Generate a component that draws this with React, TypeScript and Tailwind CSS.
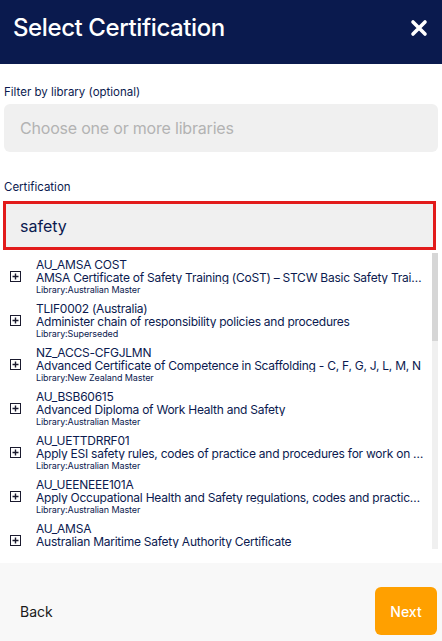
import React from 'react';

// Certification search results
const results = [
  { code: 'AU_AMSA COST', title: 'AMSA Certificate of Safety Training (CoST) – STCW Basic Safety Training', library: 'Australian Master' },
  { code: 'TLIF0002 (Australia)', title: 'Administer chain of responsibility policies and procedures', library: 'Superseded' },
  { code: 'NZ_ACCS-CFGJLMN', title: 'Advanced Certificate of Competence in Scaffolding - C, F, G, J, L, M, N', library: 'New Zealand Master' },
  { code: 'AU_BSB60615', title: 'Advanced Diploma of Work Health and Safety', library: 'Australian Master' },
  { code: 'AU_UETTDRRF01', title: 'Apply ESI safety rules, codes of practice and procedures for work on or near electrical apparatus', library: 'Australian Master' },
  { code: 'AU_UEENEEE101A', title: 'Apply Occupational Health and Safety regulations, codes and practices in the workplace', library: 'Australian Master' },
  { code: 'AU_AMSA', title: 'Australian Maritime Safety Authority Certificate', library: 'Australian Master' },
];

function PlusBox() {
  return (
    <svg width="11" height="11" viewBox="0 0 11 11" className="shrink-0">
      <rect x="0.5" y="0.5" width="10" height="10" fill="none" stroke="#1a1a2e" strokeWidth="1" />
      <path d="M5.5 2.5v6M2.5 5.5h6" stroke="#1a1a2e" strokeWidth="1.4" />
    </svg>
  );
}

export default function App() {
  return (
    <div className="flex h-[641px] w-[442px] flex-col bg-white font-['Inter',sans-serif] text-[#0b1a4f]">
      {/* Header */}
      <div className="flex h-16 shrink-0 items-center justify-between bg-[#0a1a4e] pb-2 pl-[13px] pr-[14px]">
        <h1 className="text-[24px] font-medium tracking-[-0.4px] text-white">Select Certification</h1>
        <svg width="18" height="18" viewBox="0 0 18 18">
          <path d="M3 3l12 12M15 3L3 15" stroke="white" strokeWidth="3.6" strokeLinecap="round" />
        </svg>
      </div>

      {/* Body */}
      <div className="flex min-h-0 flex-1 flex-col px-1 pt-[20px]">
        <label className="text-[11.5px] leading-[16px]">Filter by library (optional)</label>
        <div className="mt-[4px] flex h-12 items-center rounded-md bg-[#f0f0f0] px-4 text-[16px] tracking-[-0.2px] text-[#b3b3b3]">
          Choose one or more libraries
        </div>

        <label className="mt-[27px] text-[11.5px] leading-[16px]">Certification</label>
        <div className="mt-[6px] -ml-px mr-[2px] flex h-[49px] items-center border-[3px] border-[#e21b1b] bg-[#f0f0f0] px-[14px] text-[16px]">
          safety
        </div>

        <div className="mt-[3px] flex h-[296px]">
          <div className="min-w-0 flex-1 overflow-hidden">
            {results.map((r) => (
              <div key={r.code} className="flex h-11 items-center gap-[15px] pl-[6px] pr-[6px] pt-[3px]">
                <PlusBox />
                <div className="min-w-0 flex-1 tracking-[-0.25px]">
                  <div className="text-[12px] leading-[13px]">{r.code}</div>
                  <div className="truncate text-[12px] leading-[13px]">{r.title}</div>
                  <div className="text-[9px] leading-[11px] tracking-[-0.1px]">Library:{r.library}</div>
                </div>
              </div>
            ))}
          </div>
          {/* scrollbar */}
          <div className="flex w-[6px] shrink-0 flex-col bg-[#f0f0f0]">
            <div className="h-[88px] bg-[#d6d6d6]" />
          </div>
        </div>
      </div>

      {/* Footer */}
      <div className="flex h-[78px] shrink-0 items-center justify-between bg-[#f8f8f8] pl-5 pr-[5px] pt-[18px]">
        <button className="text-[14px] text-[#1a1a1a]">Back</button>
        <button className="h-12 w-[62px] rounded-md bg-[#ffa000] text-[14px] font-medium text-white">Next</button>
      </div>
    </div>
  );
}
